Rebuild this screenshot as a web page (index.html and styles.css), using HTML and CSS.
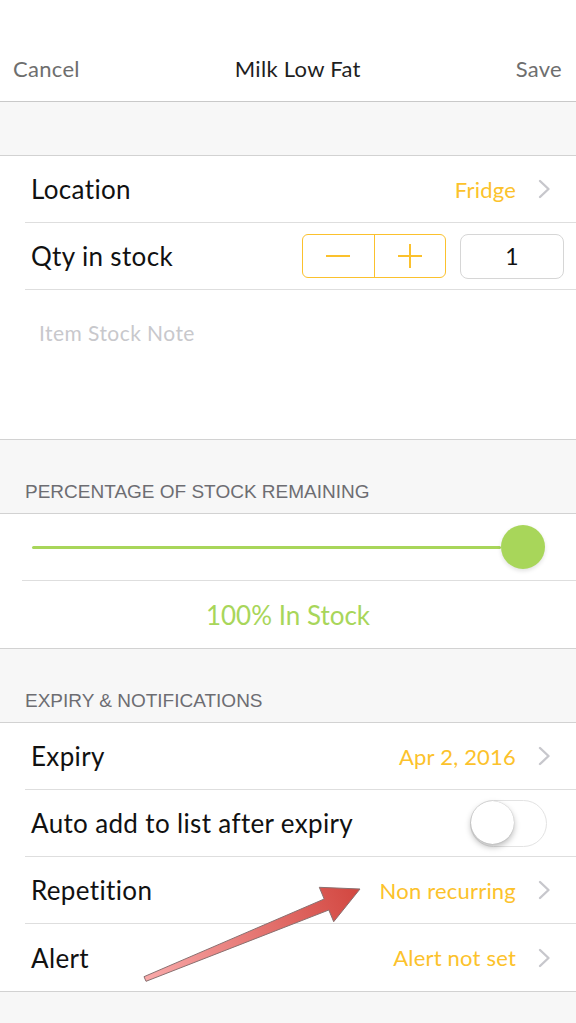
FILE: index.html
```html
<!DOCTYPE html>
<html>
<head>
<meta charset="utf-8">
<link rel="stylesheet" href="styles.css">
</head>
<body>
<div class="screen">
  <header class="nav">
    <span class="nav-btn">Cancel</span>
    <span class="nav-title">Milk Low Fat</span>
    <span class="nav-btn">Save</span>
  </header>
  <div class="spacer"></div>

  <section class="group">
    <div class="row">
      <span class="label">Location</span>
      <span class="value">Fridge</span>
      <svg class="chev" viewBox="0 0 13 20" width="13" height="20"><polyline points="2,2 10.5,10 2,18" fill="none" stroke="#c7c7cc" stroke-width="2.4" stroke-linecap="round" stroke-linejoin="round"/></svg>
    </div>
    <div class="row row-qty">
      <span class="label">Qty in stock</span>
      <div class="stepper">
        <span class="step"><svg viewBox="0 0 26 26" width="26" height="26"><line x1="1" y1="13" x2="25" y2="13" stroke="#fbc12d" stroke-width="2"/></svg></span>
        <span class="step step-plus"><svg viewBox="0 0 26 26" width="26" height="26"><line x1="1" y1="13" x2="25" y2="13" stroke="#fbc12d" stroke-width="2"/><line x1="13" y1="1" x2="13" y2="25" stroke="#fbc12d" stroke-width="2"/></svg></span>
      </div>
      <div class="qty-box">1</div>
    </div>
    <div class="note">Item Stock Note</div>
  </section>

  <div class="section-head">PERCENTAGE OF STOCK REMAINING</div>
  <section class="group">
    <div class="row row-slider">
      <div class="track"></div>
      <div class="thumb"></div>
    </div>
    <div class="stock">100% In Stock</div>
  </section>

  <div class="section-head">EXPIRY &amp; NOTIFICATIONS</div>
  <section class="group">
    <div class="row">
      <span class="label">Expiry</span>
      <span class="value">Apr 2, 2016</span>
      <svg class="chev" viewBox="0 0 13 20" width="13" height="20"><polyline points="2,2 10.5,10 2,18" fill="none" stroke="#c7c7cc" stroke-width="2.4" stroke-linecap="round" stroke-linejoin="round"/></svg>
    </div>
    <div class="row row-toggle">
      <span class="label">Auto add to list after expiry</span>
      <span class="toggle"><span class="knob"></span></span>
    </div>
    <div class="row">
      <span class="label">Repetition</span>
      <span class="value">Non recurring</span>
      <svg class="chev" viewBox="0 0 13 20" width="13" height="20"><polyline points="2,2 10.5,10 2,18" fill="none" stroke="#c7c7cc" stroke-width="2.4" stroke-linecap="round" stroke-linejoin="round"/></svg>
    </div>
    <div class="row row-last">
      <span class="label">Alert</span>
      <span class="value">Alert not set</span>
      <svg class="chev" viewBox="0 0 13 20" width="13" height="20"><polyline points="2,2 10.5,10 2,18" fill="none" stroke="#c7c7cc" stroke-width="2.4" stroke-linecap="round" stroke-linejoin="round"/></svg>
    </div>
  </section>
  <div class="bottom"></div>

  <svg class="arrow" viewBox="0 0 576 1023" width="576" height="1023">
    <defs>
      <linearGradient id="ag" gradientUnits="userSpaceOnUse" x1="145" y1="979" x2="360" y2="889">
        <stop offset="0" stop-color="#f9a9a9"/>
        <stop offset="1" stop-color="#d2463f"/>
      </linearGradient>
    </defs>
    <polygon points="144,976.7 324.2,899 319.3,887.3 360,889 333.7,921.7 328.8,910 146,981.3" fill="url(#ag)" stroke="#8a7070" stroke-width="1" stroke-linejoin="miter"/>
  </svg>
</div>
</body>
</html>
```

FILE: styles.css
```css
* { box-sizing: border-box; }
html, body { margin: 0; padding: 0; }
body { background: #f7f7f7; font-family: Lato, "Noto Sans", sans-serif; }

.screen {
  position: relative;
  width: 576px;
  height: 1023px;
  overflow: hidden;
  background: #f7f7f7;
}

.nav {
  height: 102px;
  background: #fff;
  border-bottom: 1px solid #c9c9c9;
  display: flex;
  align-items: center;
  justify-content: space-between;
  padding: 36px 14px 0 13px;
  letter-spacing: 0.3px;
}
.nav-btn { font-size: 22px; color: #6e6e6e; }
.nav-title { font-size: 22px; color: #1e1e1e; }

.spacer {
  height: 54px;
  border-bottom: 1px solid #d2d2d2;
}

.group {
  background: #fff;
  border-bottom: 1px solid #d2d2d2;
}

.row {
  height: 67px;
  margin-left: 25px;
  padding: 0 25px 0 6px;
  border-bottom: 1px solid #dedede;
  display: flex;
  align-items: center;
}
.row-last { border-bottom: none; }

.label {
  font-size: 26px;
  color: #111;
  flex: 1;
  letter-spacing: 0.35px;
}
.value {
  font-size: 22px;
  color: #fcc22b;
  margin-right: 22px;
  letter-spacing: 0.2px;
}
.chev { display: block; }

.row-qty { padding-right: 12px; }
.stepper {
  display: flex;
  width: 144px;
  height: 44px;
  border: 1.5px solid #fbc12d;
  border-radius: 6px;
  margin-right: 14px;
}
.step {
  flex: 1;
  display: flex;
  align-items: center;
  justify-content: center;
}
.step-plus { border-left: 1.5px solid #fbc12d; }
.qty-box {
  width: 104px;
  height: 45px;
  border: 1px solid #d6d6d6;
  border-radius: 8px;
  display: flex;
  align-items: center;
  justify-content: center;
  font-size: 23px;
  color: #111;
}

.note {
  height: 149px;
  padding: 30px 0 0 39px;
  font-size: 21px;
  color: #c8c8cc;
  letter-spacing: 0.45px;
}

.section-head {
  height: 74px;
  display: flex;
  align-items: flex-end;
  padding: 0 25px 10px;
  font-family: "Liberation Sans", Arial, sans-serif;
  font-size: 19px;
  color: #6d6d72;
  border-bottom: 1px solid #d2d2d2;
}

.row-slider {
  margin-left: 22px;
  padding: 0 31px 0 10px;
}
.track {
  flex: 1;
  height: 3px;
  border-radius: 2px;
  background: #a8d65a;
}
.thumb {
  width: 44px;
  height: 44px;
  border-radius: 50%;
  background: #a8d65a;
  box-shadow: 0 2px 4px rgba(0,0,0,0.12);
}

.stock {
  height: 67px;
  display: flex;
  align-items: center;
  justify-content: center;
  font-size: 26px;
  color: #a8d65a;
}

.row-toggle { padding-right: 29px; }
.toggle {
  position: relative;
  width: 77px;
  height: 47px;
  border-radius: 24px;
  border: 1.5px solid #e3e3e3;
  background: #fff;
}
.knob {
  position: absolute;
  left: 0;
  top: 0.5px;
  width: 43px;
  height: 43px;
  border-radius: 50%;
  background: #fff;
  box-shadow: 0 3px 6px rgba(0,0,0,0.28), 0 0 1px rgba(0,0,0,0.3);
}

.bottom { height: 40px; }

.arrow {
  position: absolute;
  left: 0;
  top: 0;
  pointer-events: none;
}
```
